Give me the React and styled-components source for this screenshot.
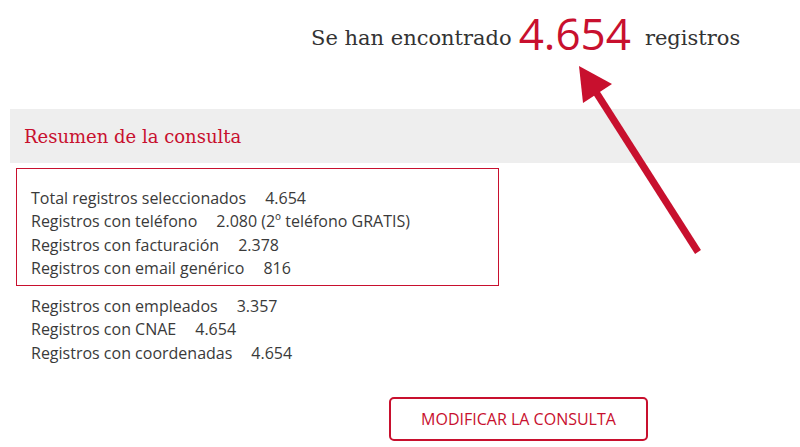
import React from "react";
import styled, { createGlobalStyle } from "styled-components";

const Global = createGlobalStyle`
  html, body { margin: 0; padding: 0; background: #ffffff; }
  body { width: 800px; height: 447px; overflow: hidden; }
`;

const RED = "#c8102e";

const Page = styled.div`
  position: relative;
  width: 800px;
  height: 447px;
  padding-left: 10px;
  box-sizing: border-box;
  font-family: "Open Sans", "Liberation Sans", sans-serif;
  color: #3a3a3a;
`;

const Found = styled.div`
  height: 109px;
  display: flex;
  align-items: flex-end;
  padding-left: 301px;
  box-sizing: border-box;
  padding-bottom: 55px;
`;

const FoundText = styled.span`
  font-family: "DejaVu Serif", "Liberation Serif", serif;
  font-size: 21px;
  line-height: 1;
  color: #333;
  margin-bottom: 5px;
`;

const FoundNumber = styled.span`
  font-family: "Open Sans", sans-serif;
  font-size: 44px;
  line-height: 1;
  color: ${RED};
  margin: 0 ${(p) => p.$right}px -1px 7px;
`;

const Band = styled.div`
  height: 54px;
  background: #eeeeee;
  display: flex;
  align-items: center;
  padding-left: 14px;
`;

const BandTitle = styled.h2`
  margin: 0;
  font-family: "DejaVu Serif", "Liberation Serif", serif;
  font-weight: 400;
  font-size: 18px;
  color: ${RED};
`;

const Highlight = styled.div`
  margin: 5px 0 0 6px;
  width: 483px;
  height: 118px;
  box-sizing: border-box;
  border: 1.5px solid ${RED};
  padding: 18px 0 0 14px;
`;

const List = styled.div`
  padding-left: ${(p) => p.$pad}px;
  padding-top: ${(p) => p.$top}px;
`;

const Row = styled.div`
  font-size: 16px;
  line-height: 23.3px;
  white-space: nowrap;
`;

const Value = styled.span`
  margin-left: 19px;
`;

const ButtonRow = styled.div`
  padding: 32px 0 0 379px;
`;

const Button = styled.button`
  width: 259px;
  height: 44px;
  box-sizing: border-box;
  border: 2px solid ${RED};
  border-radius: 5px;
  background: #fff;
  color: ${RED};
  font-family: "Open Sans", sans-serif;
  font-size: 16px;
  text-transform: uppercase;
  cursor: pointer;
`;

const ArrowSvg = styled.svg`
  position: absolute;
  left: 0;
  top: 0;
  pointer-events: none;
`;

const Arrow = () => (
  <ArrowSvg width="800" height="447" viewBox="0 0 800 447">
    <line x1="698" y1="252" x2="594" y2="89" stroke={RED} strokeWidth="7" />
    <polygon points="579,66 583,103 612,84" fill={RED} />
  </ArrowSvg>
);

const top = [
  ["Total registros seleccionados", "4.654"],
  ["Registros con teléfono", "2.080 (2º teléfono GRATIS)"],
  ["Registros con facturación", "2.378"],
  ["Registros con email genérico", "816"],
];
const rest = [
  ["Registros con empleados", "3.357"],
  ["Registros con CNAE", "4.654"],
  ["Registros con coordenadas", "4.654"],
];

export default function App() {
  return (
    <>
      <Global />
      <Page>
        <Found>
          <FoundText>Se han encontrado</FoundText>
          <FoundNumber $right={14}>4.654</FoundNumber>
          <FoundText>registros</FoundText>
        </Found>
        <Band>
          <BandTitle>Resumen de la consulta</BandTitle>
        </Band>
        <Highlight>
          {top.map(([l, v]) => (
            <Row key={l}>
              {l}
              <Value>{v}</Value>
            </Row>
          ))}
        </Highlight>
        <List $pad={21} $top={9}>
          {rest.map(([l, v]) => (
            <Row key={l}>
              {l}
              <Value>{v}</Value>
            </Row>
          ))}
        </List>
        <ButtonRow>
          <Button>Modificar la consulta</Button>
        </ButtonRow>
        <Arrow />
      </Page>
    </>
  );
}
